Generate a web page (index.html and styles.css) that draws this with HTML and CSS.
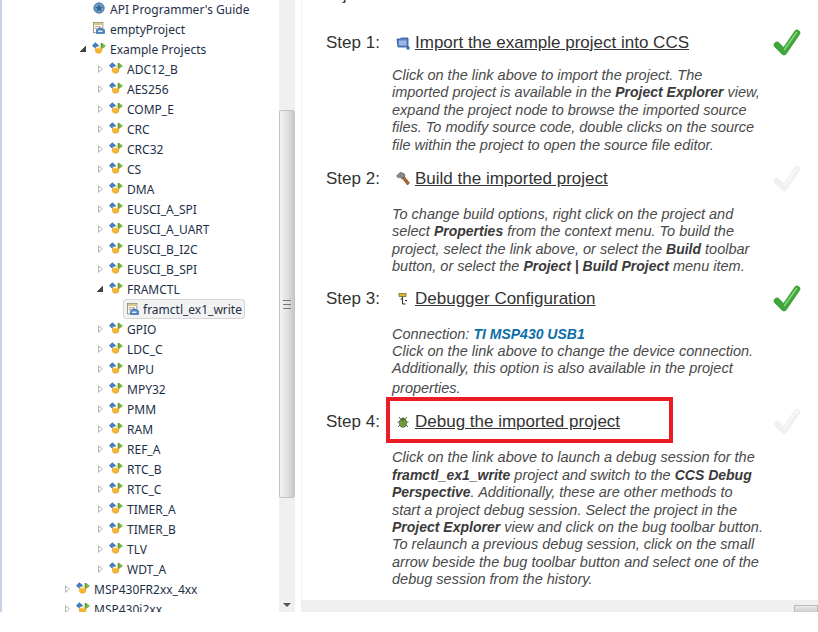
FILE: index.html
```html
<!DOCTYPE html>
<html>
<head>
    <title>Resource Explorer</title>
    <link rel="stylesheet" href="styles.css">
</head>
<body>

    <svg class="icon-defs" width="0" height="0">
        <defs>
            <symbol id="i-group" viewBox="0 0 17 14">
                <path d="M4 0.5 L8 4 L4 7.5 L0.5 4 Z" fill="#3f7fc4" stroke="#2a5c96" stroke-width="0.7"/>
                <path d="M12 1 L16.5 4.5 L12 8 Z" fill="#7dbb3c" stroke="#5a9a28" stroke-width="0.5"/>
                <rect x="10.6" y="1" width="1.4" height="7" fill="#4d8a22"/>
                <circle cx="8" cy="9.5" r="4" fill="#f5b52e" stroke="#d9951a" stroke-width="0.6"/>
                <rect x="4.5" y="5.5" width="6" height="2" fill="#fff" opacity="0.75"/>
            </symbol>
            <symbol id="i-project" viewBox="0 0 14 14">
                <rect x="0.5" y="0.5" width="11" height="12" fill="#fff" stroke="#8c8c70"/>
                <rect x="1" y="1" width="10" height="2.5" fill="#d9c98a"/>
                <path d="M2 5.5 H9 M2 7.5 H5" stroke="#c08a60" stroke-width="1"/>
                <path d="M4 9 L8 6.5 L13.5 9 V13.5 H4 Z" fill="#4a86c8" stroke="#2e5f9a" stroke-width="0.7"/>
                <rect x="6" y="10" width="5" height="1.5" fill="#fff"/>
            </symbol>
            <symbol id="i-check" viewBox="0 0 28 28">
                <path class="check-body" d="M4 16 L11 23 L24 4"/>
                <path class="check-shine" d="M11.5 20.5 L23.5 3.5"/>
            </symbol>
        </defs>
    </svg>

    <div class="window">

        <div class="tree-pane">
            <ul class="tree">
                <li class="row level-2"><span class="twisty none"></span><svg class="node-icon" viewBox="0 0 16 16"><circle cx="8" cy="8" r="7" fill="#6f9cc4" stroke="#3d6c9a"/><path d="M8 2.5 L9.5 6.5 L13.5 6.5 L10.3 9 L11.5 13 L8 10.6 L4.5 13 L5.7 9 L2.5 6.5 L6.5 6.5 Z" fill="#2f6496"/></svg><span>API Programmer's Guide</span></li>
                <li class="row level-2"><span class="twisty none"></span><svg class="node-icon"><use href="#i-project"/></svg><span>emptyProject</span></li>
                <li class="row level-2"><span class="twisty open"></span><svg class="node-icon"><use href="#i-group"/></svg><span>Example Projects</span></li>
                <li class="row level-3"><span class="twisty"></span><svg class="node-icon"><use href="#i-group"/></svg><span>ADC12_B</span></li>
                <li class="row level-3"><span class="twisty"></span><svg class="node-icon"><use href="#i-group"/></svg><span>AES256</span></li>
                <li class="row level-3"><span class="twisty"></span><svg class="node-icon"><use href="#i-group"/></svg><span>COMP_E</span></li>
                <li class="row level-3"><span class="twisty"></span><svg class="node-icon"><use href="#i-group"/></svg><span>CRC</span></li>
                <li class="row level-3"><span class="twisty"></span><svg class="node-icon"><use href="#i-group"/></svg><span>CRC32</span></li>
                <li class="row level-3"><span class="twisty"></span><svg class="node-icon"><use href="#i-group"/></svg><span>CS</span></li>
                <li class="row level-3"><span class="twisty"></span><svg class="node-icon"><use href="#i-group"/></svg><span>DMA</span></li>
                <li class="row level-3"><span class="twisty"></span><svg class="node-icon"><use href="#i-group"/></svg><span>EUSCI_A_SPI</span></li>
                <li class="row level-3"><span class="twisty"></span><svg class="node-icon"><use href="#i-group"/></svg><span>EUSCI_A_UART</span></li>
                <li class="row level-3"><span class="twisty"></span><svg class="node-icon"><use href="#i-group"/></svg><span>EUSCI_B_I2C</span></li>
                <li class="row level-3"><span class="twisty"></span><svg class="node-icon"><use href="#i-group"/></svg><span>EUSCI_B_SPI</span></li>
                <li class="row level-3"><span class="twisty open"></span><svg class="node-icon"><use href="#i-group"/></svg><span>FRAMCTL</span></li>
                <li class="row level-4"><span class="selected"><svg class="node-icon small"><use href="#i-project"/></svg><span>framctl_ex1_write</span></span></li>
                <li class="row level-3"><span class="twisty"></span><svg class="node-icon"><use href="#i-group"/></svg><span>GPIO</span></li>
                <li class="row level-3"><span class="twisty"></span><svg class="node-icon"><use href="#i-group"/></svg><span>LDC_C</span></li>
                <li class="row level-3"><span class="twisty"></span><svg class="node-icon"><use href="#i-group"/></svg><span>MPU</span></li>
                <li class="row level-3"><span class="twisty"></span><svg class="node-icon"><use href="#i-group"/></svg><span>MPY32</span></li>
                <li class="row level-3"><span class="twisty"></span><svg class="node-icon"><use href="#i-group"/></svg><span>PMM</span></li>
                <li class="row level-3"><span class="twisty"></span><svg class="node-icon"><use href="#i-group"/></svg><span>RAM</span></li>
                <li class="row level-3"><span class="twisty"></span><svg class="node-icon"><use href="#i-group"/></svg><span>REF_A</span></li>
                <li class="row level-3"><span class="twisty"></span><svg class="node-icon"><use href="#i-group"/></svg><span>RTC_B</span></li>
                <li class="row level-3"><span class="twisty"></span><svg class="node-icon"><use href="#i-group"/></svg><span>RTC_C</span></li>
                <li class="row level-3"><span class="twisty"></span><svg class="node-icon"><use href="#i-group"/></svg><span>TIMER_A</span></li>
                <li class="row level-3"><span class="twisty"></span><svg class="node-icon"><use href="#i-group"/></svg><span>TIMER_B</span></li>
                <li class="row level-3"><span class="twisty"></span><svg class="node-icon"><use href="#i-group"/></svg><span>TLV</span></li>
                <li class="row level-3"><span class="twisty"></span><svg class="node-icon"><use href="#i-group"/></svg><span>WDT_A</span></li>
                <li class="row level-1"><span class="twisty"></span><svg class="node-icon"><use href="#i-group"/></svg><span>MSP430FR2xx_4xx</span></li>
                <li class="row level-1"><span class="twisty"></span><svg class="node-icon"><use href="#i-group"/></svg><span>MSP430i2xx</span></li>
            </ul>
        </div>

        <div class="v-scroll">
            <div class="v-thumb"><span class="grip"></span></div>
            <span class="arrow-down"></span>
        </div>

        <div class="main-pane">
            <div class="content">
                <h2 class="clipped-title">Project</h2>

                <div class="step step-1">
                    <div class="step-head">
                        <span class="step-label">Step 1:</span>
                        <svg class="step-icon" viewBox="0 0 14 14"><path d="M1 3 H4 L5 2 H12 V11 H2 Z" fill="#5b84c8" stroke="#2f4f96" stroke-width="0.8"/><rect x="3" y="4.5" width="7.5" height="5" fill="#9db8e6"/><rect x="10.5" y="10.5" width="3" height="3" fill="#2f6db0"/></svg>
                        <a class="step-link" href="#">Import the example project into CCS</a>
                        <svg class="check done"><use href="#i-check"/></svg>
                    </div>
                    <p class="step-text">Click on the link above to import the project. The<br>imported project is available in the <strong>Project Explorer</strong> view,<br>expand the project node to browse the imported source<br>files. To modify source code, double clicks on the source<br>file within the project to open the source file editor.</p>
                </div>

                <div class="step step-2">
                    <div class="step-head">
                        <span class="step-label">Step 2:</span>
                        <svg class="step-icon" viewBox="0 0 14 14"><path d="M5.5 5.5 L7.5 3.5 L13.5 11 L11.5 13 Z" fill="#a9682e" stroke="#6e4018" stroke-width="0.6"/><path d="M0.5 4 L4 0.5 L8 1.5 L9 4 L6 7 L4 5 L2.5 6 Z" fill="#8a8a8a" stroke="#4a4a4a" stroke-width="0.6"/></svg>
                        <a class="step-link" href="#">Build the imported project</a>
                        <svg class="check pending"><use href="#i-check"/></svg>
                    </div>
                    <p class="step-text">To change build options, right click on the project and<br>select <strong>Properties</strong> from the context menu. To build the<br>project, select the link above, or select the <strong>Build</strong> toolbar<br>button, or select the <strong>Project | Build Project</strong> menu item.</p>
                </div>

                <div class="step step-3">
                    <div class="step-head">
                        <span class="step-label">Step 3:</span>
                        <svg class="step-icon" viewBox="0 0 14 14"><rect x="3" y="1.5" width="7" height="3" fill="#d9b93a" stroke="#6e5c10" stroke-width="0.7"/><path d="M6.5 4.5 V12 M4.5 7 H6.5 M6.5 12 H9.5 M9 8.5 H11" stroke="#333" stroke-width="1.1" fill="none"/></svg>
                        <a class="step-link" href="#">Debugger Configuration</a>
                        <svg class="check done"><use href="#i-check"/></svg>
                    </div>
                    <p class="step-text">Connection: <strong class="connection">TI MSP430 USB1</strong><br>Click on the link above to change the device connection.<br>Additionally, this option is also available in the project<br><span class="last-line">properties.</span></p>
                </div>

                <div class="step step-4">
                    <div class="step-head">
                        <span class="step-label">Step 4:</span>
                        <svg class="step-icon" viewBox="0 0 14 14"><path d="M3 2 L5.5 5 M11 2 L8.5 5 M1.5 7 H4 M12.5 7 H10 M2 12 L4.5 9.5 M12 12 L9.5 9.5" stroke="#3d4a3a" stroke-width="0.9"/><ellipse cx="7" cy="8" rx="3.6" ry="4.3" fill="#6f9a3c" stroke="#3d5c20" stroke-width="0.6"/><circle cx="7" cy="4.2" r="1.8" fill="#4d6a2e"/></svg>
                        <a class="step-link" href="#">Debug the imported project</a>
                        <svg class="check pending"><use href="#i-check"/></svg>
                        <span class="callout"></span>
                    </div>
                    <p class="step-text">Click on the link above to launch a debug session for the<br><strong>framctl_ex1_write</strong> project and switch to the <strong>CCS Debug</strong><br><strong>Perspective</strong>. Additionally, these are other methods to<br>start a project debug session. Select the project in the<br><strong>Project Explorer</strong> view and click on the bug toolbar button.<br>To relaunch a previous debug session, click on the small<br>arrow beside the bug toolbar button and select one of the<br>debug session from the history.</p>
                </div>
            </div>

            <div class="h-scroll"><div class="h-thumb"></div></div>
        </div>

    </div>

</body>
</html>
```

FILE: styles.css
```css
body {
    margin: 0;
    padding: 0;
    background-color: white;
    font-family: 'Liberation Sans', Arial, sans-serif;
}

.icon-defs {
    display: block;
    height: 0;
}

.window {
    display: flex;
    height: 612px;
    width: 818px;
    overflow: hidden;
    background-color: white;
}

/* left tree */
.tree-pane {
    width: 277px;
    border-left: 2px solid #c9d1ea;
    overflow: hidden;
    flex-shrink: 0;
}

.tree {
    list-style: none;
    margin: -1px 0 0;
    padding: 0;
    font-family: 'Noto Sans', sans-serif;
    font-size: 12px;
    color: #1e3048;
}

.row {
    display: flex;
    align-items: center;
    height: 20px;
    white-space: nowrap;
}

.level-1 { padding-left: 63px; }
.level-2 { padding-left: 79px; }
.level-3 { padding-left: 96px; }
.level-4 { padding-left: 121px; }

.twisty {
    position: relative;
    width: 0;
    height: 0;
    margin-right: 6px;
    border-left: 5px solid #b4b4b4;
    border-top: 4px solid transparent;
    border-bottom: 4px solid transparent;
    flex-shrink: 0;
}

.twisty::after {
    content: "";
    position: absolute;
    left: -4px;
    top: -2px;
    border-left: 3px solid white;
    border-top: 2px solid transparent;
    border-bottom: 2px solid transparent;
}

.twisty.open {
    width: 6px;
    height: 6px;
    margin: 0 6px 0 -1px;
    border: none;
    background: linear-gradient(135deg, transparent 50%, #444 50%);
}

.twisty.open::after,
.twisty.none::after {
    display: none;
}

.twisty.none {
    width: 11px;
    margin-right: 0;
    border: none;
}

.node-icon {
    width: 14px;
    height: 12px;
    margin-right: 4px;
    margin-top: -2px;
    flex-shrink: 0;
}

.node-icon.small {
    width: 12px;
    height: 12px;
    margin: 0 4px 0 0;
}

.selected {
    display: flex;
    align-items: center;
    height: 18px;
    padding: 0 2px 0 3px;
    background-color: #f2f2f2;
    border: 1px solid #d6d6d6;
    border-radius: 3px;
}

/* scrollbar beside the tree */
.v-scroll {
    width: 16px;
    flex-shrink: 0;
    background-color: #f0f0f0;
    position: relative;
}

.v-thumb {
    box-sizing: border-box;
    height: 388px;
    margin-top: 110px;
    border: 1px solid #c4c4c4;
    border-radius: 2px;
    background: linear-gradient(to right, #f4f4f4, #e2e2e2 50%, #c8c8c8);
    display: flex;
    align-items: center;
    justify-content: center;
}

.grip {
    width: 8px;
    height: 7px;
    border-top: 1px solid #777;
    border-bottom: 1px solid #777;
    background: linear-gradient(#777, #777) center / 100% 1px no-repeat;
}

.arrow-down {
    position: absolute;
    left: 4px;
    bottom: 5px;
    border-top: 4px solid #555;
    border-left: 4px solid transparent;
    border-right: 4px solid transparent;
}

/* right side */
.main-pane {
    margin-left: 6px;
    flex: 1;
    display: flex;
    flex-direction: column;
    border-left: 1px solid #f0f0f0;
    min-width: 0;
}

.content {
    flex: 1;
    overflow: hidden;
    padding-left: 24px;
    color: #333;
}

.clipped-title {
    margin: -14px 0 0 -8px;
    height: 16px;
    font-size: 16px;
    font-weight: normal;
}

.step-head {
    display: flex;
    align-items: center;
    height: 24px;
    position: relative;
}

.step-label {
    width: 70px;
    font-size: 17px;
    color: #333;
    flex-shrink: 0;
}

.step-icon {
    width: 14px;
    height: 14px;
    margin-right: 5px;
    flex-shrink: 0;
}

.step-link {
    font-size: 17px;
    color: #333;
    text-decoration: underline;
    white-space: nowrap;
}

.check {
    position: absolute;
    left: 447px;
    top: -2px;
    width: 28px;
    height: 28px;
}

.check.done {
    --check-color: #3fa53c;
    --check-shine: #86d874;
}

.check.pending {
    --check-color: #f1f1f1;
    --check-shine: #f8f8f8;
}

.check-body {
    fill: none;
    stroke: var(--check-color);
    stroke-width: 6.5;
    stroke-linecap: round;
    stroke-linejoin: round;
}

.check-shine {
    fill: none;
    stroke: var(--check-shine);
    stroke-width: 1.6;
    stroke-linecap: round;
}

.step-text {
    margin: 0;
    padding-left: 66px;
    font-size: 14.5px;
    line-height: 17.4px;
    font-style: italic;
    color: #4a4a4a;
    white-space: nowrap;
}

.step-text strong {
    font-size: 14px;
    color: #3a3a3a;
}

.step-text .connection { color: #0a6ea8; }

.last-line {
    display: inline-block;
    margin-top: 2px;
}

.step-1 { margin-top: 29px; }
.step-1 .step-text { margin-top: 12px; }

.step-2 { margin-top: 13px; }
.step-2 .step-text { margin-top: 15px; }

.step-3 { margin-top: 11px; }
.step-3 .step-text { margin-top: 15px; }

.step-4 { margin-top: 13px; }
.step-4 .step-text { margin-top: 15px; }

/* red box drawn over the screenshot */
.callout {
    position: absolute;
    left: 60px;
    top: -13px;
    width: 279px;
    height: 38px;
    border: 4px solid #ed1c24;
}

.h-scroll {
    height: 12px;
    background-color: #f0f0f0;
    display: flex;
    justify-content: flex-end;
    align-items: flex-end;
    flex-shrink: 0;
}

.h-thumb {
    width: 24px;
    height: 7px;
    background: linear-gradient(#e8e8e8, #cfcfcf);
    border: 1px solid #bbb;
    border-bottom: none;
    box-sizing: border-box;
}
```
